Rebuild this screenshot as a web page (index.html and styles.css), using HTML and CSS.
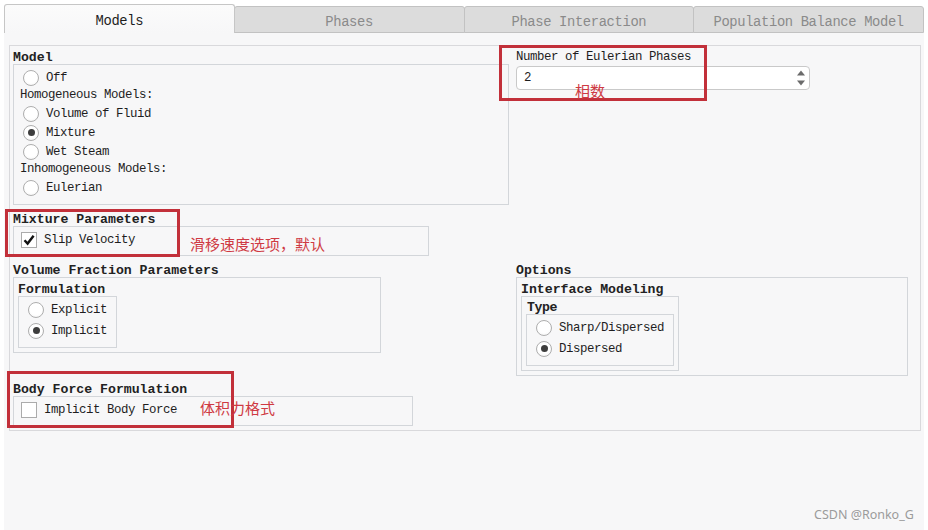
FILE: index.html
```html
<!DOCTYPE html>
<html lang="zh-CN">
<head>
<meta charset="utf-8">
<title>Models</title>
<link rel="stylesheet" href="styles.css">
</head>
<body>
<div class="window">
  <div class="tabs">
    <div class="tab active">Models</div>
    <div class="tab">Phases</div>
    <div class="tab">Phase Interaction</div>
    <div class="tab">Population Balance Model</div>
  </div>
  <div class="content">
    <div class="panel">
      <section class="group model">
        <div class="gtitle">Model</div>
        <div class="gbox model-box">
          <div class="radio"><span class="rb"></span>Off</div>
          <div class="sublabel">Homogeneous Models:</div>
          <div class="radio"><span class="rb"></span>Volume of Fluid</div>
          <div class="radio"><span class="rb on"></span>Mixture</div>
          <div class="radio"><span class="rb"></span>Wet Steam</div>
          <div class="sublabel">Inhomogeneous Models:</div>
          <div class="radio"><span class="rb"></span>Eulerian</div>
        </div>
      </section>

      <section class="phases">
        <div class="plabel">Number of Eulerian Phases</div>
        <div class="spin">
          <span class="val">2</span>
          <svg class="arrows" width="10" height="18" viewBox="0 0 10 18">
            <path d="M1 6.5 L5 1.5 L9 6.5 Z" fill="#6b6b6b"/>
            <path d="M1 11.5 L5 16.5 L9 11.5 Z" fill="#6b6b6b"/>
          </svg>
        </div>
      </section>

      <section class="group mixture">
        <div class="gtitle">Mixture Parameters</div>
        <div class="gbox check-box">
          <div class="check"><span class="cb"><svg width="14" height="14" viewBox="0 0 14 14"><path d="M2.5 7.2 L5.6 10.6 L11.6 2.8" fill="none" stroke="#111" stroke-width="2.4"/></svg></span>Slip Velocity</div>
        </div>
      </section>

      <section class="group volume">
        <div class="gtitle">Volume Fraction Parameters</div>
        <div class="gbox outer-box">
          <div class="gtitle">Formulation</div>
          <div class="gbox radio-box form-box">
            <div class="radio tall"><span class="rb"></span>Explicit</div>
            <div class="radio tall"><span class="rb on"></span>Implicit</div>
          </div>
        </div>
      </section>

      <section class="group options">
        <div class="gtitle">Options</div>
        <div class="gbox outer-box">
          <div class="gtitle">Interface Modeling</div>
          <div class="gbox iface-box">
            <div class="gtitle type-title">Type</div>
            <div class="gbox radio-box type-box">
              <div class="radio tall"><span class="rb"></span>Sharp/Dispersed</div>
              <div class="radio tall"><span class="rb on"></span>Dispersed</div>
            </div>
          </div>
        </div>
      </section>

      <section class="group body-force">
        <div class="gtitle">Body Force Formulation</div>
        <div class="gbox check-box">
          <div class="check"><span class="cb"></span>Implicit Body Force</div>
        </div>
      </section>
    </div>
  </div>

  <div class="mark mark-phases"></div>
  <div class="mark mark-mixture"></div>
  <div class="mark mark-body"></div>
  <div class="note note-phases">相数</div>
  <div class="note note-mixture">滑移速度选项，默认</div>
  <div class="note note-body">体积力格式</div>
  <div class="watermark">CSDN @Ronko_G</div>
</div>
</body>
</html>
```

FILE: styles.css
```css
* { box-sizing: border-box; }

body {
  margin: 0;
  background: #ffffff;
  font-family: "Liberation Mono", "DejaVu Sans Mono", monospace;
  color: #1e1e1e;
}

.window {
  position: relative;
  width: 928px;
  height: 530px;
  padding: 4px 4px 0 4px;
  overflow: hidden;
}

/* ---------- tabs ---------- */
.tabs {
  display: flex;
  height: 29px;
  align-items: flex-start;
}

.tab {
  flex: 1;
  height: 27px;
  margin-top: 2px;
  padding-top: 3px;
  background: #dcdcdc;
  border: 1px solid #c2c2c2;
  border-radius: 3px 3px 0 0;
  color: #8a8a8a;
  font-size: 13.8px;
  letter-spacing: -0.35px;
  line-height: 25px;
  text-align: center;
}

.tab + .tab { margin-left: -1px; }

.tab.active {
  height: 29px;
  margin-top: 0;
  padding-top: 4px;
  background: linear-gradient(#fbfbfb, #f7f7f8);
  border-color: #c6c6c6;
  border-bottom: 0;
  color: #1e1e1e;
  position: relative;
  z-index: 1;
}

/* ---------- content ---------- */
.content {
  height: 497px;
  background: #f7f7f8;
  padding: 12px 0 0 5px;
}

.panel {
  width: 912px;
  border: 1px solid #d9d9dc;
  padding: 3px 0 4px 3px;
  display: grid;
  grid-template-columns: 496px 392px;
  column-gap: 7px;
  row-gap: 6px;
  align-items: start;
}

.model { grid-column: 1; grid-row: 1; }
.phases { grid-column: 2; grid-row: 1; }
.mixture { grid-column: 1; grid-row: 2; }
.volume { grid-column: 1; grid-row: 3; }
.options { grid-column: 2; grid-row: 3; }
.body-force { grid-column: 1; grid-row: 4; margin-top: -1px; }

.gtitle {
  font-weight: bold;
  font-size: 13.2px;
  line-height: 17px;
  height: 15px;
  color: #222;
  white-space: nowrap;
}

.gbox {
  border: 1px solid #d3d6da;
  font-size: 12.4px;
  letter-spacing: -0.44px;
}

/* model */
.model-box {
  width: 496px;
  padding: 3px 6px 7px 6px;
}

.sublabel {
  height: 17px;
  line-height: 17px;
}

.radio {
  display: flex;
  align-items: center;
  gap: 7px;
  height: 19px;
  padding-left: 3px;
  white-space: nowrap;
}

.radio.tall { height: 21px; padding-left: 0; }

.rb {
  width: 16px;
  height: 16px;
  flex: none;
  border-radius: 50%;
  border: 1px solid #aeaeae;
  background: radial-gradient(circle at 50% 40%, #ffffff 55%, #efefef 100%);
  display: flex;
  align-items: center;
  justify-content: center;
}

.rb.on::after {
  content: "";
  width: 7px;
  height: 7px;
  border-radius: 50%;
  background: #3d3d3d;
}

/* phases spin */
.phases { padding-top: 1px; }

.plabel {
  font-size: 12.4px;
  letter-spacing: -0.44px;
  line-height: 14px;
  height: 14px;
  white-space: nowrap;
}

.spin {
  margin-top: 2px;
  width: 294px;
  height: 24px;
  background: #ffffff;
  border: 1px solid #c9c9c9;
  border-radius: 4px;
  display: flex;
  align-items: center;
  justify-content: space-between;
  padding: 0 3px 0 7px;
  font-size: 12.4px;
}

.arrows { display: block; }

/* check boxes */
.check-box {
  padding: 3px 7px 5px 7px;
}

.mixture .check-box { width: 416px; }
.body-force .check-box { width: 400px; }

.check {
  display: flex;
  align-items: center;
  gap: 7px;
  height: 20px;
  white-space: nowrap;
}

.cb {
  width: 16px;
  height: 16px;
  flex: none;
  border: 1px solid #ababab;
  background: #ffffff;
  display: flex;
  align-items: center;
  justify-content: center;
}

/* nested groups */
.outer-box {
  padding: 3px 4px 4px 4px;
  letter-spacing: normal;
}

.volume .outer-box { width: 368px; }
.options .outer-box { width: 392px; }

.radio-box {
  padding: 2px 9px 6px 9px;
  letter-spacing: -0.44px;
}

.form-box { width: 99px; }

.iface-box {
  width: 158px;
  padding: 2px 4px 4px 4px;
}

.type-title { padding-left: 1px; }

.type-box { width: 148px; }

/* ---------- annotations ---------- */
.mark {
  position: absolute;
  border: 3px solid #c2303a;
}

.mark-phases { left: 499px; top: 45px; width: 208px; height: 56px; }
.mark-mixture { left: 5px; top: 209px; width: 175px; height: 48px; }
.mark-body { left: 7px; top: 371px; width: 227px; height: 57px; }

.note {
  position: absolute;
  font-family: "Noto Sans CJK SC", sans-serif;
  font-size: 15px;
  line-height: 18px;
  color: #cf3a43;
  white-space: nowrap;
}

.note-phases { left: 575px; top: 82px; }
.note-mixture { left: 190px; top: 235px; }
.note-body { left: 200px; top: 399px; }

.watermark {
  position: absolute;
  left: 814px;
  top: 506px;
  font-family: "Noto Sans", "Liberation Sans", sans-serif;
  font-size: 12.5px;
  line-height: 18px;
  color: #9b9b9b;
  white-space: nowrap;
}
```
